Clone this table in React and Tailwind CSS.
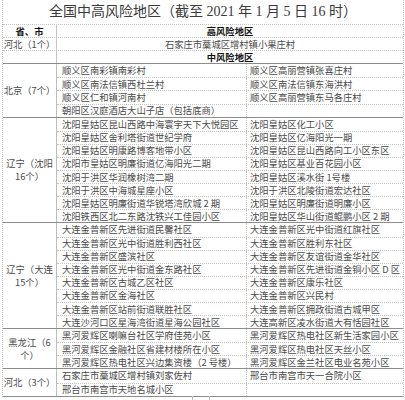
const groups = [
  {
    label: <>北京（7个）</>,
    rows: [
      ["顺义区南彩镇南彩村", "顺义区高丽营镇张喜庄村"],
      ["顺义区南法信镇西杜兰村", "顺义区南法信镇东海洪村"],
      ["顺义区仁和镇河南村", "顺义区高丽营镇东马各庄村"],
      ["朝阳区汉庭酒店大山子店（包括底商）", ""],
    ],
  },
  {
    label: <>辽宁（沈阳<br />16个）</>,
    rows: [
      ["沈阳皇姑区昆山西路中海寰宇天下大悦园区", "沈阳皇姑区化工小区"],
      ["沈阳皇姑区舍利塔街道世纪学府", "沈阳皇姑区亿海阳光一期"],
      ["沈阳皇姑区明康路博客地带小区", "沈阳皇姑区昆山西路向工小区东区"],
      ["沈阳市皇姑区明廉街道亿海阳光二期", "沈阳皇姑区基业百花园小区"],
      ["沈阳于洪区华润橡树湾二期", "沈阳皇姑区溪水街 1号楼"],
      ["沈阳于洪区中海城星座小区", "沈阳于洪区北陵街道宏达社区"],
      ["沈阳皇姑区明廉街道华锐塔湾欣城 2 期", "沈阳皇姑区明廉街道明廉小区"],
      ["沈阳铁西区北二东路沈铁兴工佳园小区", "沈阳皇姑区华山街道鲲鹏小区 2 期"],
    ],
  },
  {
    label: <>辽宁（大连<br />15个）</>,
    rows: [
      ["大连金普新区先进街道民馨社区", "大连金普新区光中街道红旗社区"],
      ["大连金普新区光中街道胜利西社区", "大连金普新区胜利东社区"],
      ["大连金普新区盛滨社区", "大连金普新区友谊街道金华社区"],
      ["大连金普新区光中街道金东路社区", "大连金普新区先进街道金铜小区 D 区"],
      ["大连金普新区古城乙区社区", "大连金普新区康乐社区"],
      ["大连金普新区金海社区", "大连金普新区兴民村"],
      ["大连金普新区站前街道联胜社区", "大连金普新区拥政街道古城甲区"],
      ["大连沙河口区星海湾街道星海公园社区", "大连高新区凌水街道大有恬园社区"],
    ],
  },
  {
    label: <>黑龙江（6<br />个）</>,
    rows: [
      ["黑河爱辉区喇嘛台社区学府佳苑小区", "黑河爱辉区热电社区新生活家园小区"],
      ["黑河爱辉区金融社区省建材楼所在小区", "黑河爱辉区热电社区天丝小区"],
      ["黑河爱辉区热电社区兴边集资楼（2 号楼）", "黑河爱辉区金兰社区电业名苑小区"],
    ],
  },
  {
    label: <>河北（3个）</>,
    rows: [
      ["石家庄市藁城区增村镇刘家佐村", "邢台市南宫市天一合院小区"],
      ["邢台市南宫市天地名城小区", ""],
    ],
  },
];

function Row({ left, right, top }) {
  return (
    <div className={`flex h-[13.1px] ${top ? "border-t border-dotted border-[#c4c4c4]" : ""}`}>
      <div className="w-[190px] flex items-center pl-[5px] border-r border-dotted border-[#c4c4c4] whitespace-nowrap">
        {left}
      </div>
      <div className="flex-1 flex items-center pl-[3px] whitespace-nowrap">{right}</div>
    </div>
  );
}

function HeadRow({ left, right, bold, leftBold }) {
  return (
    <div className="flex h-[13.1px] border-b border-dotted border-[#c4c4c4]">
      <div
        className={`w-[54px] flex items-center justify-center border-r border-[#c4c4c4] whitespace-nowrap ${leftBold ? "font-bold text-[#111]" : ""}`}
      >
        {left}
      </div>
      <div className={`flex-1 flex items-center justify-center whitespace-nowrap ${bold ? "font-bold text-[#111]" : ""}`}>
        {right}
      </div>
    </div>
  );
}

export default function App() {
  return (
    <div className="w-[405px] h-[400px] overflow-hidden bg-white text-[#4a4a4a] font-['Noto_Sans_CJK_SC',sans-serif] text-[9.3px] leading-[11px]">
      <div className="ml-[2px] w-[402px] border-l border-r border-dotted border-[#bdbdbd]">
        {/* Title */}
        <div className="h-[25px] flex items-center justify-center border-b border-dotted border-[#c4c4c4] text-[14px] leading-[18px] text-[#3a3a3a] font-['Liberation_Serif','Noto_Sans_CJK_SC',serif]">
          全国中高风险地区（截至 2021 年 1 月 5 日 16 时）
        </div>

        <HeadRow left="省、市" right="高风险地区" bold leftBold />
        <HeadRow left="河北（1个）" right="石家庄市藁城区增村镇小果庄村" />
        <div className="flex h-[12.1px]">
          <div className="w-[54px] border-r border-[#c4c4c4]" />
          <div className="flex-1 flex items-center justify-center font-bold text-[#111]">中风险地区</div>
        </div>

        {/* Medium-risk groups */}
        <div className="border-b border-[#8c8c8c]">
          {groups.map((g, gi) => (
            <div key={gi} className="flex border-t border-[#8c8c8c]">
              <div className="w-[54px] flex items-center justify-center text-center leading-[13px] border-r border-[#bdbdbd] whitespace-nowrap">
                <div>{g.label}</div>
              </div>
              <div className="flex-1">
                {g.rows.map((r, i) => (
                  <Row key={i} left={r[0]} right={r[1]} top={i > 0} />
                ))}
              </div>
            </div>
          ))}
        </div>
      </div>
      <div className="ml-[192px] w-[18px] h-[4px] mt-[-1px] border-x border-[#bdbdbd]" />
    </div>
  );
}
